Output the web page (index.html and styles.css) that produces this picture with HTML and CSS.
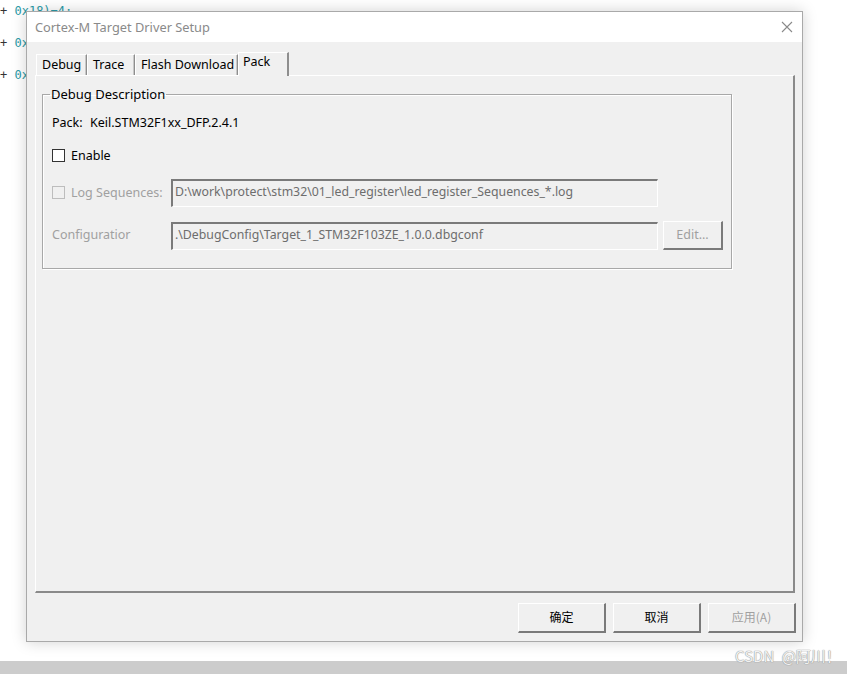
FILE: index.html
```html
<!DOCTYPE html>
<html>
<head>
<meta charset="utf-8">
<link rel="stylesheet" href="styles.css">
</head>
<body>
<div class="code">
  <div class="code-line"><span class="plus">+</span> <span class="hex">0x18)=4;</span></div>
  <div class="code-line"><span class="plus">+</span> <span class="hex">0x</span></div>
  <div class="code-line"><span class="plus">+</span> <span class="hex">0x</span></div>
</div>

<div class="dialog">
  <div class="titlebar">
    <span class="title">Cortex-M Target Driver Setup</span>
    <svg class="close" width="12" height="12" viewBox="0 0 12 12"><path d="M1 1 L11 11 M11 1 L1 11" stroke="#8a8a8a" stroke-width="1.1" fill="none"/></svg>
  </div>
  <div class="client">
    <div class="tabs">
      <div class="tab tab-debug">Debug</div>
      <div class="tab tab-trace">Trace</div>
      <div class="tab tab-flash">Flash Download</div>
      <div class="tab tab-pack active">Pack</div>
    </div>
    <div class="panel">
      <fieldset class="group">
        <legend>Debug Description</legend>
        <div class="pack-line"><span class="pack-label">Pack:</span><span>Keil.STM32F1xx_DFP.2.4.1</span></div>
        <div class="check-row">
          <span class="box"></span><span>Enable</span>
        </div>
        <div class="form-grid">
          <div class="flabel disabled"><span class="box box-dis"></span><span>Log Sequences:</span></div>
          <div class="field">D:\work\protect\stm32\01_led_register\led_register_Sequences_*.log</div>
          <div></div>
          <div class="flabel disabled plain">Configuratior</div>
          <div class="field">.\DebugConfig\Target_1_STM32F103ZE_1.0.0.dbgconf</div>
          <div class="btn small disabled">Edit...</div>
        </div>
      </fieldset>
    </div>
    <div class="buttons">
      <div class="btn big">确定</div>
      <div class="btn big">取消</div>
      <div class="btn big disabled">应用(A)</div>
    </div>
  </div>
</div>

<div class="bottom-bar"></div>
<div class="watermark">CSDN @阿川！</div>
</body>
</html>
```

FILE: styles.css
```css
html, body {
  margin: 0;
  padding: 0;
}
body {
  width: 847px;
  height: 674px;
  background: #ffffff;
  position: relative;
  overflow: hidden;
  font-family: "Noto Sans", "Noto Sans CJK SC", sans-serif;
  font-size: 12.5px;
  color: #000;
}

.code {
  position: absolute;
  left: 0;
  top: 1px;
  font-family: "DejaVu Sans Mono", monospace;
  font-size: 12px;
  z-index: 0;
}
.code-line {
  height: 32px;
  line-height: 20px;
  white-space: pre;
}
.plus { color: #333; }
.hex { color: #2b9aa6; }

.dialog {
  position: absolute;
  left: 26px;
  top: 11px;
  width: 775px;
  height: 629px;
  border: 1px solid #a9a9a9;
  background: #f0f0f0;
  box-shadow: 0 0 14px rgba(0, 0, 0, 0.18);
  z-index: 1;
  display: flex;
  flex-direction: column;
}

.titlebar {
  height: 30px;
  background: #ffffff;
  display: flex;
  align-items: center;
  justify-content: space-between;
  padding: 0 9px 0 8px;
  flex: none;
}
.title {
  color: #8a8a8a;
  font-size: 12.8px;
  margin-top: -1px;
}

.client {
  flex: 1;
  display: flex;
  flex-direction: column;
  padding: 10px 7px 0 8px;
}

.tabs {
  display: flex;
  align-items: flex-end;
  height: 23px;
  margin-left: 1px;
  position: relative;
  z-index: 2;
}
.tab {
  height: 21px;
  box-sizing: border-box;
  border-top: 1px solid #ffffff;
  border-left: 1px solid #ffffff;
  border-right: 1px solid #8e8e8e;
  box-shadow: inset -1px 0 0 #c8c8c8;
  padding: 0 0 0 5px;
  line-height: 20px;
  background: #f0f0f0;
}
.tab-debug { width: 51px; }
.tab-trace { width: 48px; }
.tab-flash { width: 103px; }
.tab-pack { width: 51px; }
.tab.active {
  height: 24px;
  margin-bottom: -1px;
  line-height: 18px;
  padding-left: 4px;
  border-right: 2px solid #8e8e8e;
  box-shadow: none;
}

.panel {
  width: 760px;
  height: 518px;
  box-sizing: border-box;
  border-top: 1px solid #ffffff;
  border-left: 1px solid #ffffff;
  border-right: 2px solid #8a8a8a;
  border-bottom: 2px solid #8a8a8a;
  padding: 10px 0 0 6px;
  flex: none;
  position: relative;
  z-index: 1;
}

.group {
  margin: 0;
  width: 690px;
  height: 183px;
  box-sizing: border-box;
  border: 1px solid #a8a8a8;
  box-shadow: 1px 1px 0 #ffffff, inset 1px 1px 0 #ffffff;
  padding: 11px 0 0 9px;
}
.group legend {
  padding: 0 1px;
  margin-left: -2px;
  font-size: 13px;
  line-height: 16px;
}

.pack-line {
  height: 20px;
  line-height: 20px;
  display: flex;
}
.pack-label { width: 24px; margin-right: 14px; }

.check-row {
  display: flex;
  align-items: center;
  height: 20px;
  margin-top: 12px;
}
.box {
  width: 11px;
  height: 11px;
  border: 1px solid #333;
  background: #fff;
  margin-right: 6px;
  flex: none;
}
.box-dis {
  border-color: #bdbdbd;
  background: #f0f0f0;
}

.form-grid {
  display: grid;
  grid-template-columns: 114px 487px 60px;
  column-gap: 5px;
  row-gap: 14px;
  margin-top: 14px;
  align-items: center;
}
.flabel {
  display: flex;
  align-items: center;
  white-space: nowrap;
  margin-top: -2px;
}
.disabled { color: #a0a0a0; }
.flabel.plain { margin-top: -3px; }

.field {
  height: 28px;
  box-sizing: border-box;
  border-top: 2px solid #7a7a7a;
  border-left: 2px solid #7a7a7a;
  border-right: 1px solid #ffffff;
  border-bottom: 1px solid #ffffff;
  padding: 0 0 0 2px;
  line-height: 22px;
  color: #6d6d6d;
  white-space: nowrap;
  overflow: hidden;
  font-size: 12.3px;
}

.btn {
  box-sizing: border-box;
  border-top: 1px solid #ffffff;
  border-left: 1px solid #ffffff;
  border-right: 2px solid #7a7a7a;
  border-bottom: 2px solid #7a7a7a;
  background: #f0f0f0;
  text-align: center;
}
.btn.small {
  height: 29px;
  line-height: 25px;
}

.buttons {
  display: flex;
  justify-content: flex-end;
  gap: 7px;
  padding: 10px 0 0 0;
  margin-right: -1px;
}
.btn.big {
  width: 88px;
  height: 30px;
  line-height: 26px;
  font-family: "Noto Sans CJK SC", sans-serif;
  font-size: 12px;
}

.bottom-bar {
  position: absolute;
  left: 0;
  right: 0;
  bottom: 0;
  height: 13px;
  background: #cccccc;
}
.watermark {
  position: absolute;
  left: 735px;
  top: 645px;
  font-family: "Noto Sans CJK SC", sans-serif;
  font-size: 15px;
  line-height: 22px;
  word-spacing: 4px;
  color: #f2f2f2;
  text-shadow: 0 0 1px #8f8f8f, 0 0 1px #8f8f8f;
  z-index: 2;
  white-space: nowrap;
}
```
